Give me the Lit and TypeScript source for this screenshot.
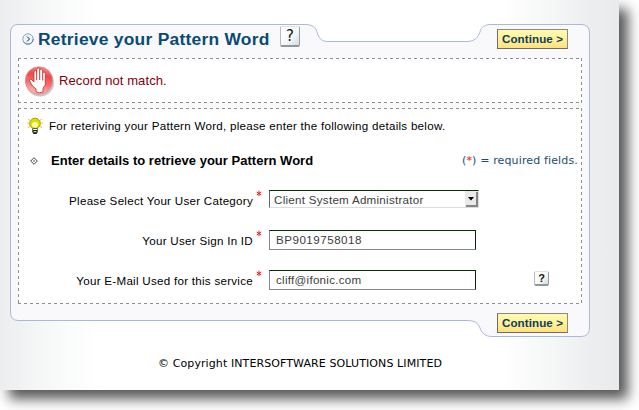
import { LitElement, html, css, svg } from "lit";
import { customElement, property } from "lit/decorators.js";

@customElement("help-button")
class HelpButton extends LitElement {
  @property({ type: Boolean, reflect: true }) large = false;

  static styles = css`
    :host { display: block; width: 15px; height: 15px; }
    :host([large]) { width: 20px; height: 21px; }
    .key {
      box-sizing: border-box; width: 100%; height: 100%;
      display: flex; align-items: center; justify-content: center;
      font: bold 11px/1 "Liberation Sans", sans-serif; color: #101010;
      background: linear-gradient(135deg, #ffffff 20%, #f4f6f6 60%, #d5dadd);
      border: 1px solid #b5babf; border-right-color: #969da3; border-bottom: 2px solid #8e979b;
      border-top-color: #dfe2e4;
      border-radius: 2px;
    }
    :host([large]) .key { font: 15px/1 "DejaVu Sans", sans-serif; }
  `;
  render() {
    return html`<div class="key">?</div>`;
  }
}

@customElement("continue-button")
class ContinueButton extends LitElement {
  static styles = css`
    :host { display: block; width: 71px; height: 20px; }
    .btn {
      box-sizing: border-box; width: 71px; height: 20px; padding: 0; margin: 0;
      font: bold 11.6px/18px "Liberation Sans", Arial, sans-serif; letter-spacing: 0.08px; color: #0b3d5c;
      background: linear-gradient(#fffab0, #fff09a 50%, #ffe07c);
      border: 1px solid #8a8a80; border-bottom-color: #6c6c6c; border-left-color: #6c6c6c;
      display: block; white-space: nowrap;
    }
  `;
  render() {
    return html`<button class="btn">Continue &gt;</button>`;
  }
}

@customElement("app-root")
class AppRoot extends LitElement {
  static styles = css`
    :host { display: block; width: 639px; height: 410px; overflow: hidden; background: #fff;
      font-family: "Liberation Sans", Arial, sans-serif; color: #000; }
    .page {
      box-sizing: border-box; width: 619px; height: 390px; padding: 24px 0 0 10px;
      box-shadow: 9px 9px 12px rgba(0, 0, 0, 0.66);
      background: linear-gradient(90deg, #eceef0 0, #eff1f2 20px, #f5f7f7 38px, #fff 97px, #fff 500px, #f5f6f6 555px, #eceef0 590px, #e8eaec 619px);
    }
    .panel { position: relative; width: 580px; height: 313px; display: flex; flex-direction: column; }
    .frame { position: absolute; left: 0; top: 0; width: 580px; height: 313px; }
    .content { position: relative; display: flex; flex-direction: column; height: 313px; }
    .head { display: flex; height: 34px; align-items: flex-start; }
    .arrow { width: 13px; height: 13px; margin: 9px 0 0 12px; }
    h1 { margin: 5px 0 0 3px; width: 242px; font-size: 17.4px; letter-spacing: 0.26px; line-height: 21px; color: #084b75; white-space: nowrap; }
    .head help-button { margin-top: 2px; }
    .head continue-button { margin: 5px 0 0 197px; }
    .error { display: flex; align-items: center; height: 45px; margin-left: 14px; gap: 4px; font-size: 13px; letter-spacing: 0.09px; color: #82000c; }
    .hand { width: 31px; height: 32px; }
    .form { margin: 5px 11px 0 8px; height: 196px; display: flex; flex-direction: column; font-size: 11.6px; }
    .tip { display: flex; height: 36px; padding-left: 8px; gap: 5px; letter-spacing: 0.27px; }
    .tip span { line-height: 35px; }
    .bulb { width: 18px; height: 18px; margin-top: 9px; }
    .sub { display: flex; height: 34px; align-items: center; padding-left: 12px; }
    h2 { margin: 0 0 0 13px; width: 411px; font-size: 13px; letter-spacing: 0.02px; line-height: 36px; white-space: nowrap; }
    .note { font: 11px/34px "DejaVu Sans", sans-serif; color: #1b4d70; white-space: nowrap; letter-spacing: 0.14px; }
    .note b { font-weight: normal; color: #f00; }
    .row { display: grid; grid-template-columns: 235px 10px 211px 48px auto; column-gap: 3px; height: 40px; align-items: start; }
    .row label { text-align: right; line-height: 16px; padding-top: 15px; letter-spacing: 0.27px; white-space: nowrap; }
    .star { width: 7px; height: 7px; margin-top: 12px; }
    .field { box-sizing: border-box; height: 20px; width: 207px; margin-top: 12px; padding: 0 0 0 6px;
      border: 1px solid #888; border-top-color: #0a2a0a; border-right-color: #0a2a0a;
      font: 11.6px/17px "Liberation Sans", Arial, sans-serif; color: #3c3c3c; background: #fff; letter-spacing: 0.27px; white-space: nowrap; }
    .num { letter-spacing: 0.5px; }
    .select { width: 210px; height: 18px; padding-left: 4px; border-color: #0a2a0a #ddd #ddd #666; display: flex; justify-content: space-between; }
    .drop { width: 13px; height: 16px; }
    .row help-button { margin-top: 13px; }
    .foot { padding: 9px 0 0 487px; }
    .copy { font: 11px/18px "DejaVu Sans", sans-serif; letter-spacing: 0.1px; margin: 18px 0 0 148px; white-space: nowrap; }
  `;

  private star() {
    return svg`<svg class="star" viewBox="0 0 7 7"><path d="M3 0.7V6.3M0.7 2L5.3 5M5.3 2L0.7 5" stroke="#e01010" stroke-width=".9" fill="none"/></svg>`;
  }

  render() {
    return html`
      <div class="page">
        <div class="panel">
          <svg class="frame" viewBox="0 0 580 313">
            <path d="M8 .5H295C303 .5 306 4 307 8C309 14 311 17.500 318 17.500H457C465 17.500 468 13 470 8C471 3 475 .5 481 .5H571Q579.500 .5 579.500 9V304Q579.500 312.500 571 312.500H482C475 312.500 472 309 470 304C468 299 465 296.500 457 296.500H8Q.5 296.500 .5 288V9Q.5 .5 8 .5Z" fill="#f9f9fb" stroke="#acb8d9"/>
            <rect x="8" y="34" width="564" height="45" fill="#fff"/>
            <rect x="8" y="84" width="564" height="196" fill="#fff"/>
            <path d="M8 34.500H572M8 78.500H572M8 84.500H572M8 279.500H572M8.500 34V79M571.500 34V79M8.500 84V280M571.500 84V280" stroke="#8e8e8e" stroke-dasharray="3" fill="none" shape-rendering="crispEdges"/>
          </svg>
          <div class="content">
            <div class="head">
              <svg class="arrow" viewBox="0 0 13 13">
                <circle cx="6" cy="6" r="5.200" fill="#eef3fa" stroke="#8fa5c2"/>
                <path d="M1.500 9Q4 12 8 11Q11.300 9.500 11.300 6" fill="none" stroke="#6680a4"/>
                <path d="M5 3.500L7.500 6L5 8.500" fill="none" stroke="#1c2d46"/>
              </svg>
              <h1>Retrieve your Pattern Word</h1>
              <help-button large></help-button>
              <continue-button></continue-button>
            </div>
            <div class="error">
              <svg class="hand" viewBox="0 0 31 32">
                <defs>
                  <linearGradient id="red" x1=".6" y1="0" x2=".4" y2="1">
                    <stop offset="0" stop-color="#f58a88"/><stop offset=".3" stop-color="#f2474a"/><stop offset=".6" stop-color="#f66e6e"/><stop offset="1" stop-color="#fbc4c2"/>
                  </linearGradient>
                </defs>
                <ellipse cx="16" cy="18" rx="14" ry="13.500" fill="#999" opacity=".55"/>
                <circle cx="15" cy="15.500" r="13.700" fill="url(#red)" stroke="#dd9492"/>
                <path d="M5 15L7 14L10 17V7Q10 5.500 11.500 5.500Q12.700 5.500 12.700 7V4.500Q13 3 14.300 3Q15.700 3 15.700 4.500V5Q16 4 17.200 4Q18.600 4 18.700 6V8Q19 7 20 7Q21.300 7 21.300 8.500V20L19 23V27Q15 28.500 12 27V24L8.500 21Z" fill="#fff" stroke="#c9292c" stroke-width=".8"/>
                <path d="M12.700 7V15M15.700 5V15M18.700 8V15.500" stroke="#b52226" stroke-width=".9"/>
              </svg>
              <span>Record not match.</span>
            </div>
            <div class="form">
              <div class="tip">
                <svg class="bulb" viewBox="0 0 18 18">
                  <path d="M2 2L4 3.500M1 6H3M2 11L4 9.500M16 2L14 3.500M15 6H17M16 11L14 9.500" stroke="#f0b860" fill="none"/>
                  <circle cx="9" cy="6.500" r="5.300" fill="#dfe000" stroke="#a8a000"/>
                  <ellipse cx="9" cy="7.800" rx="3" ry="2.700" fill="#fcffb0"/>
                  <path d="M6.300 11.500H11.700V15L10.500 17H7.500L6.300 15Z" fill="#222"/>
                  <path d="M7 12.500H11M7.500 14.700H10.500" stroke="#eee"/>
                </svg>
                <span>For reteriving your Pattern Word, please enter the following details below.</span>
              </div>
              <div class="sub">
                <svg width="8" height="8" viewBox="0 0 8 8"><path d="M4 .7L7.300 4L4 7.300L.7 4Z" fill="none" stroke="#333" stroke-width=".9"/><path d="M4 3V5M3 4H5" stroke="#777" stroke-width=".8"/></svg>
                <h2>Enter details to retrieve your Pattern Word</h2>
                <span class="note">(<b>*</b>) = required fields.</span>
              </div>
              <div class="row">
                <label>Please Select Your User Category</label>${this.star()}
                <div class="field select"><span>Client System Administrator</span>
                  <svg class="drop" viewBox="0 0 13 16"><path d="M0 0H13V16H0Z" fill="#e9e9e9"/><path d="M1 15H12V1" fill="none" stroke="#858585" stroke-width="2"/><path d="M3 6H9L6 9.500Z" fill="#000"/></svg>
                </div>
              </div>
              <div class="row">
                <label>Your User Sign In ID</label>${this.star()}
                <div class="field num">BP9019758018</div>
              </div>
              <div class="row">
                <label>Your E-Mail Used for this service</label>${this.star()}
                <div class="field">cliff@ifonic.com</div><span></span><help-button></help-button>
              </div>
            </div>
            <div class="foot"><continue-button></continue-button></div>
          </div>
        </div>
        <div class="copy">© Copyright INTERSOFTWARE SOLUTIONS LIMITED</div>
      </div>
    `;
  }
}
